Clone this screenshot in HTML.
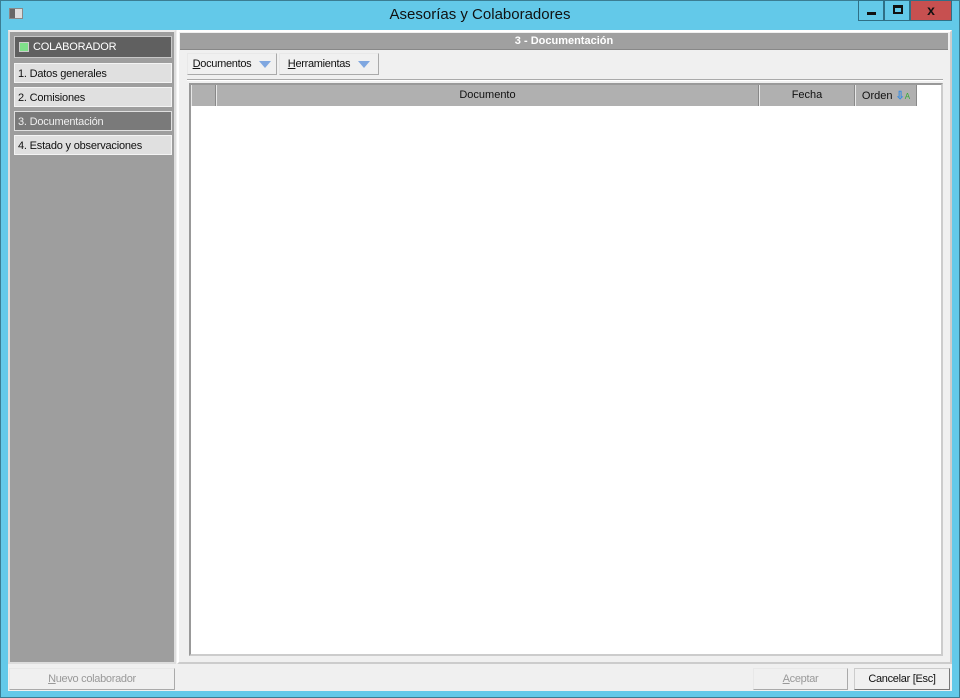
<!DOCTYPE html>
<html><head><meta charset="utf-8"><style>
*{margin:0;padding:0;box-sizing:border-box}
body{width:960px;height:698px;background:#63c9e9;position:relative;font-family:"Liberation Sans",sans-serif;font-size:11px;overflow:hidden}
.a{position:absolute}
.title{left:0;top:6px;width:960px;text-align:center;font-size:15px;color:#111}
.client{left:8px;top:30px;width:944px;height:661px;background:#f0f0f0}
.nav{left:8px;top:30px;width:168px;height:634px;background:#9e9e9e;border:2px solid #ddd;border-top:2px solid #eee}
.it{position:absolute;left:14px;width:158px;height:20px;background:#e0e0e0;color:#111;padding:4px 0 0 3px;border:1px solid #f4f4f4;letter-spacing:-0.2px}
.btn{position:absolute;height:22px;background:#f0f0f0;border:1px solid #e8e8e8;border-right-color:#aaa;border-bottom-color:#aaa;font-size:11px;color:#111;text-align:center;padding-top:4px;letter-spacing:-0.3px}
.hd{position:absolute;top:85px;height:21px;background:#b0b0b0;border-left:1px solid #e8e8e8;border-right:1px solid #888;text-align:center;padding-top:4px;color:#111}
.tri{display:inline-block;width:0;height:0;border-left:6px solid transparent;border-right:6px solid transparent;border-top:7px solid #7fa7e0;margin-left:8px;vertical-align:-1px}
</style></head><body>
<div class="a" style="left:0;top:0;width:960px;height:698px;border:1px solid #3b7d93"></div>
<div class="a" style="left:9px;top:8px;width:14px;height:11px;background:#ddd;border:1px solid #888"><div style="width:5px;height:9px;background:#666"></div></div>
<div class="a title">Asesorías y Colaboradores</div>
<div class="a" style="left:858px;top:0;width:26px;height:21px;border:1px solid #2f6f86;background:#63c9e9"><div style="margin:11px 0 0 8px;width:9px;height:3px;background:#111"></div></div>
<div class="a" style="left:884px;top:0;width:26px;height:21px;border:1px solid #2f6f86;background:#63c9e9"><div style="margin:4px 0 0 8px;width:10px;height:9px;border:2px solid #111;border-top-width:3px"></div></div>
<div class="a" style="left:910px;top:0;width:42px;height:21px;border:1px solid #2f6f86;background:#c75050;color:#111;font-weight:bold;font-size:14px;text-align:center;line-height:19px">x</div>
<div class="a client"></div>
<div class="a nav"></div>
<div class="it" style="top:36px;height:22px;background:#606060;color:#fff;border-color:#c8c8c8;padding-left:18px;padding-top:4px">COLABORADOR<div class="a" style="left:4px;top:5px;width:10px;height:10px;background:#7fe08a;border:1px solid #ccc"></div></div>
<div class="it" style="top:63px">1. Datos generales</div>
<div class="it" style="top:87px">2. Comisiones</div>
<div class="it" style="top:111px;background:#7a7a7a;color:#eee;border-color:#e0e0e0">3. Documentación</div>
<div class="it" style="top:135px">4. Estado y observaciones</div>
<div class="a" style="left:177px;top:30px;width:775px;height:634px;border:2px solid #fff;border-right-color:#ccc;border-bottom-color:#ccc"></div>
<div class="a" style="left:180px;top:33px;width:768px;height:17px;background:#a0a0a0;border-bottom:1px solid #888;color:#fff;font-weight:bold;text-align:center;padding-top:2px">3 - Documentación</div>
<div class="btn" style="left:187px;top:53px;width:90px"><u>D</u>ocumentos<span class="tri"></span></div>
<div class="btn" style="left:279px;top:53px;width:100px"><u>H</u>erramientas<span class="tri"></span></div>
<div class="a" style="left:187px;top:79px;width:756px;height:2px;border-top:1px solid #aaa;border-bottom:1px solid #fff"></div>
<div class="a" style="left:189px;top:83px;width:754px;height:573px;background:#fff;border:2px solid #ccc;border-top-color:#999;border-left-color:#999"></div>
<div class="hd" style="left:191px;width:25px"></div>
<div class="hd" style="left:216px;width:543px">Documento</div>
<div class="hd" style="left:759px;width:96px">Fecha</div>
<div class="hd" style="left:855px;width:62px">Orden <span style="color:#3a8de0;font-weight:bold">⇩</span><span style="color:#3a3;font-size:8px">A</span></div>
<div class="btn" style="left:9px;top:668px;width:166px;color:#999"><u>N</u>uevo colaborador</div>
<div class="btn" style="left:753px;top:668px;width:95px;color:#999"><u>A</u>ceptar</div>
<div class="btn" style="left:854px;top:668px;width:96px;border-color:#777;border-top-color:#ccc;border-left-color:#ccc">Cancelar [Esc]</div>
</body></html>
